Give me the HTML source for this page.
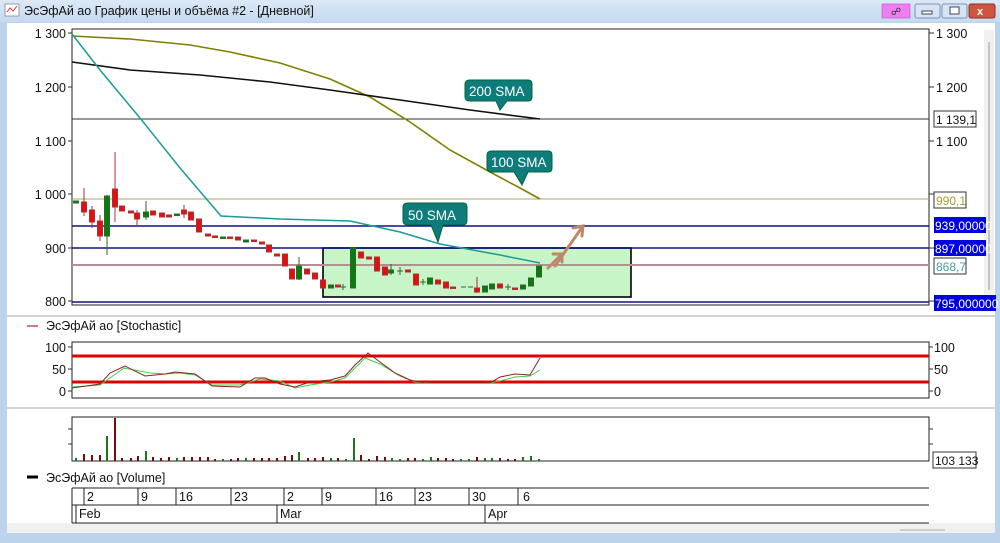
<!DOCTYPE html>
<html><head><meta charset="utf-8"><style>
body{margin:0;width:1000px;height:538px;overflow:hidden;background:#bcd3ec;font-family:"Liberation Sans","DejaVu Sans",sans-serif}
svg text{font-family:"Liberation Sans","DejaVu Sans",sans-serif}
</style></head><body>
<svg width="1000" height="538" viewBox="0 0 1000 538" xmlns="http://www.w3.org/2000/svg">
<defs><linearGradient id="tb" x1="0" y1="0" x2="0" y2="1"><stop offset="0" stop-color="#dce9f7"/><stop offset="1" stop-color="#c5d9ef"/></linearGradient></defs>
<rect x="0" y="0" width="1000" height="538" fill="#bcd3ec"/>
<rect x="0" y="0" width="1000" height="22" fill="url(#tb)"/>
<rect x="5" y="4" width="14" height="12" fill="#fff" stroke="#888" stroke-width="0.8"/>
<path d="M7 12 L10 8 L13 11 L17 6" stroke="#d33" fill="none" stroke-width="1"/>
<text x="24" y="15" font-size="12.5" fill="#111">ЭсЭфАй ао График цены и объёма #2 - [Дневной]</text>
<rect x="882" y="4" width="28" height="14" fill="#f07ef0" stroke="#c050c0" stroke-width="0.6"/>
<text x="891" y="15" font-size="10" fill="#333">☍</text>
<rect x="915" y="4" width="25" height="14" rx="2" fill="#d6e4f3" stroke="#7b93b5"/><rect x="922" y="11" width="10" height="3" fill="#fff" stroke="#445"/>
<rect x="942" y="4" width="25" height="14" rx="2" fill="#d6e4f3" stroke="#7b93b5"/><rect x="950" y="7" width="9" height="7" fill="#fff" stroke="#445"/>
<rect x="969" y="4" width="26" height="14" rx="2" fill="#d0553f" stroke="#8a3020"/><text x="977" y="15" font-size="11" fill="#fff" font-weight="bold">x</text>
<rect x="7" y="23" width="988" height="510" fill="#fff"/>
<rect x="7" y="523" width="988" height="10" fill="#f0f0f0"/>
<line x1="7" y1="316" x2="995" y2="316" stroke="#aaa"/>
<line x1="7" y1="408" x2="995" y2="408" stroke="#aaa"/>
<rect x="984" y="30" width="10" height="278" fill="#f0f0f0"/><line x1="989" y1="42" x2="989" y2="290" stroke="#999"/>

<rect x="323" y="248" width="308" height="49" fill="#c8f5c8" stroke="#000" stroke-width="1.6"/>
<rect x="72" y="29" width="857" height="276" fill="none" stroke="#222"/>
<line x1="72" y1="119" x2="929" y2="119" stroke="#333"/>
<line x1="72" y1="199" x2="929" y2="199" stroke="#a8a860"/>
<line x1="72" y1="226" x2="929" y2="226" stroke="#101080" stroke-width="1.5"/>
<line x1="72" y1="248" x2="929" y2="248" stroke="#101080" stroke-width="1.5"/>
<line x1="72" y1="265" x2="929" y2="265" stroke="#b09090" stroke-width="2"/>
<line x1="72" y1="302" x2="929" y2="302" stroke="#101080" stroke-width="1.5"/>
<polyline fill="none" stroke="#808000" stroke-width="1.6" points="72,36 130,39 190,45 230,52 280,63 330,79 370,97 410,122 450,150 490,172 520,188 540,199"/>
<polyline fill="none" stroke="#111" stroke-width="1.6" points="72,62 130,70 200,75 270,82 330,90 400,100 470,110 540,119"/>
<polyline fill="none" stroke="#1a9a9a" stroke-width="1.5" points="72,34 100,70 140,118 180,168 221,216 280,219 350,221 400,232 440,244 500,255 540,263"/>
<g fill="none" stroke="#c08868" stroke-width="3" stroke-linecap="round">
<line x1="548" y1="268" x2="562" y2="254"/><polyline points="553,254 562,254 562,262"/>
<line x1="555" y1="266" x2="583" y2="226"/><polyline points="573,228 583,226 582,236"/>
</g>
<g fill="#0f7c7c" stroke="#063" stroke-width="1">
<path d="M470 80 H528 Q532 80 532 84 V97 Q532 101 528 101 H507 L500 110 L496 101 H470 Q465 101 465 97 V84 Q465 80 470 80Z"/>
<path d="M492 151 H548 Q552 151 552 155 V168 Q552 172 548 172 H528 L522 185 L514 172 H492 Q487 172 487 168 V155 Q487 151 492 151Z"/>
<path d="M408 203 H463 Q467 203 467 207 V220 Q467 225 463 225 H443 L438 242 L431 225 H408 Q403 225 403 220 V207 Q403 203 408 203Z"/>
</g>
<g fill="#fff" font-size="13.5"><text x="469" y="96">200 SMA</text><text x="491" y="167">100 SMA</text><text x="408" y="220">50 SMA</text></g>

<g stroke-width="1">
<g stroke="#b03030" fill="#e01010">
<line x1="84" y1="188" x2="84" y2="216"/><rect x="81.5" y="202" width="5" height="10"/>
<line x1="92" y1="206" x2="92" y2="228"/><rect x="89.5" y="210" width="5" height="12"/>
<line x1="100" y1="215" x2="100" y2="241"/><rect x="97.5" y="221" width="5" height="15"/>
<line x1="115" y1="152" x2="115" y2="222"/><rect x="112.5" y="189" width="5" height="18"/>
<rect x="119.5" y="206" width="5" height="5"/><rect x="128.5" y="211" width="5" height="2"/>
<line x1="137" y1="210" x2="137" y2="225"/><rect x="134.5" y="213" width="5" height="6"/>
<rect x="150.5" y="211" width="5" height="4"/><rect x="159.5" y="213" width="5" height="4"/><rect x="166.5" y="215" width="5" height="2"/>
<line x1="184" y1="205" x2="184" y2="218"/><rect x="181.5" y="210" width="5" height="4"/>
<rect x="188.5" y="212" width="5" height="8"/><rect x="196.5" y="219" width="5" height="13"/>
<rect x="205.5" y="234" width="5" height="2"/><rect x="212.5" y="236" width="5" height="1.5"/><rect x="227.5" y="237" width="5" height="1.5"/>
<rect x="235.5" y="237" width="5" height="3"/><rect x="251.5" y="240" width="5" height="1.5"/><rect x="259.5" y="242" width="5" height="2"/>
<rect x="266.5" y="245" width="5" height="7"/><rect x="274.5" y="254" width="5" height="2"/>
<rect x="282.5" y="254" width="5" height="12"/><rect x="289.5" y="269" width="5" height="10"/>
<rect x="304.5" y="269" width="5" height="5"/><rect x="312.5" y="273" width="5" height="6"/><rect x="320.5" y="280" width="5" height="8"/>
<rect x="335.5" y="285" width="5" height="2"/><rect x="358.5" y="252" width="5" height="6"/><rect x="366.5" y="257" width="5" height="2"/>
<rect x="374.5" y="257" width="5" height="14"/><rect x="382.5" y="267" width="5" height="8"/><rect x="405.5" y="270" width="5" height="2"/>
<rect x="413.5" y="274" width="5" height="11"/><rect x="435.5" y="280" width="5" height="4"/><rect x="443.5" y="282" width="5" height="6"/>
<rect x="450.5" y="287" width="5" height="1.5"/><line x1="477" y1="277" x2="477" y2="293"/><rect x="474.5" y="288" width="5" height="4"/>
<rect x="497.5" y="284" width="5" height="4"/><rect x="512.5" y="288" width="5" height="1.5"/>
</g>
<g stroke="#2a6a2a" fill="#0a7a0a">
<rect x="73.5" y="201" width="5" height="2"/>
<line x1="107" y1="195" x2="107" y2="255"/><rect x="104.5" y="196" width="5" height="40"/>
<line x1="146" y1="201" x2="146" y2="220"/><rect x="143.5" y="212" width="5" height="5"/>
<rect x="174.5" y="214" width="5" height="1.5"/><rect x="220.5" y="237" width="5" height="1.5"/><rect x="243.5" y="240" width="5" height="2"/>
<line x1="299" y1="257" x2="299" y2="280"/><rect x="296.5" y="266" width="5" height="13"/>
<rect x="328.5" y="285" width="5" height="3"/><line x1="343" y1="284" x2="343" y2="290"/><line x1="340" y1="287" x2="346" y2="287"/>
<rect x="350.5" y="248" width="5" height="40"/>
<line x1="391" y1="264" x2="391" y2="275"/><rect x="388.5" y="270" width="5" height="3"/>
<line x1="400" y1="267" x2="400" y2="275"/><line x1="397" y1="271" x2="403" y2="271"/>
<line x1="423" y1="279" x2="423" y2="285"/><line x1="420" y1="282" x2="426" y2="282"/>
<rect x="427.5" y="278" width="5" height="6"/>
<line x1="461" y1="287" x2="466" y2="287"/><line x1="468" y1="287" x2="473" y2="287"/>
<rect x="482.5" y="286" width="5" height="6"/><rect x="489.5" y="284" width="5" height="5"/>
<line x1="508" y1="284" x2="508" y2="290"/><line x1="505" y1="287" x2="511" y2="287"/>
<rect x="520.5" y="285" width="5" height="4"/><rect x="528.5" y="278" width="5" height="8"/><rect x="536.5" y="266" width="5" height="11"/>
</g></g>

<g stroke="#333"><line x1="68" y1="33" x2="72" y2="33"/><line x1="68" y1="87" x2="72" y2="87"/><line x1="68" y1="141" x2="72" y2="141"/><line x1="68" y1="194" x2="72" y2="194"/><line x1="68" y1="248" x2="72" y2="248"/><line x1="68" y1="301" x2="72" y2="301"/>
<line x1="929" y1="33" x2="934" y2="33"/><line x1="929" y1="87" x2="934" y2="87"/><line x1="929" y1="141" x2="934" y2="141"/><line x1="929" y1="194" x2="934" y2="194"/><line x1="929" y1="248" x2="934" y2="248"/><line x1="929" y1="301" x2="934" y2="301"/></g>
<g font-size="12.5" fill="#111" text-anchor="end"><text x="66" y="38">1 300</text><text x="66" y="92">1 200</text><text x="66" y="146">1 100</text><text x="66" y="199">1 000</text><text x="66" y="253">900</text><text x="66" y="306">800</text></g>
<g font-size="12.5" fill="#111"><text x="936" y="38">1 300</text><text x="936" y="92">1 200</text><text x="936" y="146">1 100</text></g>
<rect x="934" y="111" width="42" height="16" fill="#fff" stroke="#333"/><text x="936" y="124" font-size="12" fill="#111">1 139,1</text>
<rect x="934" y="192" width="32" height="16" fill="#fff" stroke="#333"/><text x="936" y="205" font-size="12" fill="#a0a030">990,1</text>
<rect x="934" y="217" width="52" height="16" fill="#0000e0"/><text x="935" y="230" font-size="12" fill="#fff">939,00000</text>
<rect x="934" y="240" width="52" height="16" fill="#0000e0"/><text x="935" y="253" font-size="12" fill="#fff">897,00000</text>
<rect x="934" y="258" width="32" height="16" fill="#fff" stroke="#333"/><text x="936" y="271" font-size="12" fill="#40a0a0">868,7</text>
<rect x="934" y="295" width="62" height="16" fill="#0000e0"/><text x="935" y="308" font-size="12" fill="#fff">795,000000</text>

<line x1="27" y1="326" x2="38" y2="326" stroke="#b05050" stroke-width="1.5"/>
<text x="46" y="330" font-size="12.5" fill="#111">ЭсЭфАй ао [Stochastic]</text>
<rect x="72" y="342" width="857" height="56" fill="none" stroke="#222"/>
<line x1="72" y1="356" x2="929" y2="356" stroke="#e00000" stroke-width="3"/>
<line x1="72" y1="382" x2="929" y2="382" stroke="#e00000" stroke-width="3"/>
<polyline fill="none" stroke="#40d040" stroke-width="1" points="72,387 100,385 124,368 150,373 165,374 180,373 195,375 212,385 240,385 260,379 280,381 295,388 310,385 330,382 345,378 365,358 380,364 400,376 415,382 430,383 490,383 500,381 515,377 530,376 540,370"/>
<polyline fill="none" stroke="#902020" stroke-width="1" points="72,388 100,384 110,373 125,366 145,376 165,374 175,372 195,374 212,386 240,387 255,378 265,378 280,384 295,387 310,382 330,380 345,376 355,365 368,353 380,362 395,373 410,380 425,383 460,383 490,383 500,377 515,374 530,375 540,358"/>
<g stroke="#333"><line x1="68" y1="347" x2="72" y2="347"/><line x1="68" y1="369" x2="72" y2="369"/><line x1="68" y1="391" x2="72" y2="391"/><line x1="929" y1="347" x2="933" y2="347"/><line x1="929" y1="369" x2="933" y2="369"/><line x1="929" y1="391" x2="933" y2="391"/></g>
<g font-size="12.5" fill="#111"><text x="66" y="352" text-anchor="end">100</text><text x="66" y="374" text-anchor="end">50</text><text x="66" y="396" text-anchor="end">0</text><text x="934" y="352">100</text><text x="934" y="374">50</text><text x="934" y="396">0</text></g>

<rect x="72" y="417" width="857" height="44" fill="none" stroke="#222"/>
<g stroke-width="2">
<g stroke="#7a0a0a"><line x1="84" y1="461" x2="84" y2="454"/><line x1="92" y1="461" x2="92" y2="455"/><line x1="100" y1="461" x2="100" y2="455"/><line x1="115" y1="461" x2="115" y2="418"/><line x1="122" y1="461" x2="122" y2="458"/><line x1="131" y1="461" x2="131" y2="458"/><line x1="138" y1="461" x2="138" y2="456"/><line x1="153" y1="461" x2="153" y2="457"/><line x1="161" y1="461" x2="161" y2="458"/><line x1="169" y1="461" x2="169" y2="457"/><line x1="184" y1="461" x2="184" y2="457"/><line x1="192" y1="461" x2="192" y2="457"/><line x1="200" y1="461" x2="200" y2="457"/><line x1="208" y1="461" x2="208" y2="457"/><line x1="215" y1="461" x2="215" y2="459"/><line x1="231" y1="461" x2="231" y2="459"/><line x1="238" y1="461" x2="238" y2="458"/><line x1="254" y1="461" x2="254" y2="458"/><line x1="262" y1="461" x2="262" y2="458"/><line x1="269" y1="461" x2="269" y2="458"/><line x1="277" y1="461" x2="277" y2="458"/><line x1="285" y1="461" x2="285" y2="456"/><line x1="292" y1="461" x2="292" y2="455"/><line x1="308" y1="461" x2="308" y2="458"/><line x1="315" y1="461" x2="315" y2="458"/><line x1="323" y1="461" x2="323" y2="457"/><line x1="338" y1="461" x2="338" y2="458"/><line x1="361" y1="461" x2="361" y2="455"/><line x1="369" y1="461" x2="369" y2="459"/><line x1="377" y1="461" x2="377" y2="456"/><line x1="385" y1="461" x2="385" y2="457"/><line x1="408" y1="461" x2="408" y2="458"/><line x1="415" y1="461" x2="415" y2="458"/><line x1="438" y1="461" x2="438" y2="458"/><line x1="446" y1="461" x2="446" y2="458"/><line x1="453" y1="461" x2="453" y2="459"/><line x1="477" y1="461" x2="477" y2="457"/><line x1="500" y1="461" x2="500" y2="458"/><line x1="508" y1="461" x2="508" y2="459"/><line x1="515" y1="461" x2="515" y2="459"/></g>
<g stroke="#1a7a1a"><line x1="76" y1="461" x2="76" y2="458"/><line x1="107" y1="461" x2="107" y2="436"/><line x1="146" y1="461" x2="146" y2="451"/><line x1="177" y1="461" x2="177" y2="458"/><line x1="223" y1="461" x2="223" y2="459"/><line x1="246" y1="461" x2="246" y2="458"/><line x1="299" y1="461" x2="299" y2="452"/><line x1="331" y1="461" x2="331" y2="458"/><line x1="346" y1="461" x2="346" y2="459"/><line x1="354" y1="461" x2="354" y2="438"/><line x1="392" y1="461" x2="392" y2="458"/><line x1="400" y1="461" x2="400" y2="459"/><line x1="423" y1="461" x2="423" y2="459"/><line x1="431" y1="461" x2="431" y2="457"/><line x1="461" y1="461" x2="461" y2="459"/><line x1="469" y1="461" x2="469" y2="459"/><line x1="485" y1="461" x2="485" y2="458"/><line x1="492" y1="461" x2="492" y2="458"/><line x1="523" y1="461" x2="523" y2="457"/><line x1="531" y1="461" x2="531" y2="456"/><line x1="539" y1="461" x2="539" y2="459"/></g>
</g>
<g stroke="#333"><line x1="68" y1="429" x2="72" y2="429"/><line x1="68" y1="444" x2="72" y2="444"/><line x1="929" y1="429" x2="933" y2="429"/><line x1="929" y1="444" x2="933" y2="444"/></g>
<rect x="933" y="452" width="43" height="16" fill="#fff" stroke="#333"/><text x="935" y="465" font-size="12" fill="#111">103 133</text>

<line x1="27" y1="477" x2="38" y2="477" stroke="#000" stroke-width="3"/>
<text x="46" y="482" font-size="12.5" fill="#111">ЭсЭфАй ао [Volume]</text>

<g stroke="#222" fill="none"><line x1="72" y1="488" x2="929" y2="488"/><line x1="72" y1="505" x2="929" y2="505"/><line x1="72" y1="523" x2="929" y2="523"/><line x1="72" y1="488" x2="72" y2="523"/><line x1="76" y1="505" x2="76" y2="523"/>
<line x1="84" y1="488" x2="84" y2="505"/><line x1="138" y1="488" x2="138" y2="505"/><line x1="176" y1="488" x2="176" y2="505"/><line x1="231" y1="488" x2="231" y2="505"/><line x1="284" y1="488" x2="284" y2="505"/><line x1="322" y1="488" x2="322" y2="505"/><line x1="376" y1="488" x2="376" y2="505"/><line x1="415" y1="488" x2="415" y2="505"/><line x1="469" y1="488" x2="469" y2="505"/><line x1="518" y1="488" x2="518" y2="505"/>
<line x1="277" y1="505" x2="277" y2="523"/><line x1="485" y1="505" x2="485" y2="523"/></g>
<g font-size="12.5" fill="#111"><text x="87" y="501">2</text><text x="141" y="501">9</text><text x="179" y="501">16</text><text x="234" y="501">23</text><text x="287" y="501">2</text><text x="325" y="501">9</text><text x="379" y="501">16</text><text x="418" y="501">23</text><text x="472" y="501">30</text><text x="523" y="501">6</text>
<text x="79" y="518">Feb</text><text x="280" y="518">Mar</text><text x="488" y="518">Apr</text></g>
<line x1="900" y1="530" x2="945" y2="530" stroke="#aaa"/>
</svg>
</body></html>
